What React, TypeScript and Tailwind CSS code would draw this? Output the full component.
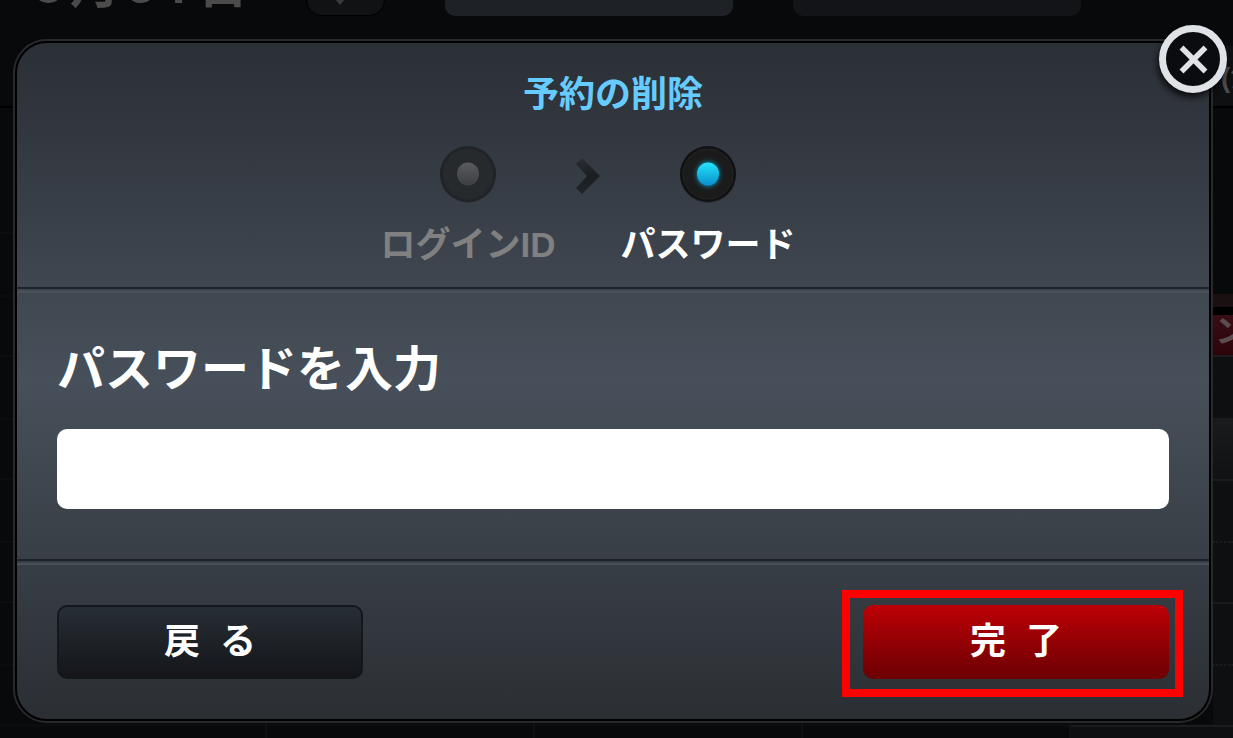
import React from "react";

const slots = [0, 1, 2, 3];
const dateGlyphs = ["8", "月", "3", "1", "日"];

function Backdrop() {
  return (
    <div aria-hidden="true" className="absolute inset-0 flex flex-col overflow-hidden bg-[#08090b]">
      <div className="flex h-4 shrink-0 items-end gap-[60px] pl-[34px]">
        <div className="flex w-[212px] shrink-0 gap-[7px] font-['Roboto','Noto_Sans_CJK_JP',sans-serif] text-[50px] leading-[60px] font-bold text-[#4b4b4b]">
          {dateGlyphs.map((glyph) => (
            <span key={glyph}>{glyph}</span>
          ))}
        </div>
        <div className="flex h-12 w-[79px] shrink-0 items-center justify-center rounded-2xl border border-black bg-[#111214] pr-3">
          <svg viewBox="0 0 16 10" className="mt-6 h-2.5 w-4" fill="#3a3a3c">
            <path d="M3 0H13L8 6Z" />
          </svg>
        </div>
        <div className="h-12 w-72 shrink-0 rounded-[10px] bg-[#1e2126]" />
        <div className="h-12 w-72 shrink-0 rounded-[10px] bg-[#131418]" />
      </div>
      <div className="mt-[30px] flex h-[62px] shrink-0 justify-end border-b-2 border-black">
        <div className="flex w-5 items-center bg-[#0f1012] pt-1 pl-2 text-[28px] font-bold whitespace-nowrap text-[#4b4b4b]">
          (注
        </div>
      </div>
      <div className="flex h-[619px] shrink-0">
        <div className="flex flex-1 flex-col border-b-2 border-[#0b0c0e]">
          <div className="h-[126px] shrink-0 border-b-2 border-[#0c0d0f]" />
          {slots.map((slot) => (
            <div key={slot} className="h-[123px] shrink-0 border-b-2 border-[#0c0d0f]">
              <div className="h-[63px] border-b-2 border-dotted border-[#0e0f11]" />
            </div>
          ))}
        </div>
        <div className="flex w-5 shrink-0 flex-col bg-[#0e0f11]">
          <div className="h-[186px] shrink-0 bg-[#08090a]" />
          <div className="h-[13px] shrink-0 bg-[#1a0f11]" />
          <div className="h-2 shrink-0 bg-black" />
          <div className="h-10 shrink-0 overflow-hidden bg-linear-to-b from-[#380d14] to-[#2d0509] pl-0.5 text-[32px] leading-8 font-bold whitespace-nowrap text-[#5b4d4f]">
            ン
          </div>
          <div className="h-[63px] shrink-0 border-t-2 border-[#1b1c1e]" />
          <div className="h-[63px] shrink-0 border-b-2 border-[#1b1c1e] bg-linear-to-b from-[#191b1d] to-[#101113]" />
          <div className="h-[123px] shrink-0 border-b-2 border-[#1b1c1e]">
            <div className="h-[62px] border-b-2 border-dotted border-[#1b1c1e]" />
          </div>
          <div className="h-[123px] shrink-0 border-b-2 border-[#1b1c1e]">
            <div className="h-[62px] border-b-2 border-dotted border-[#1b1c1e]" />
          </div>
        </div>
      </div>
      <div className="-mt-1 grid min-h-0 flex-1 grid-cols-[267px_268px_268px_268px_1fr]">
        {slots.map((slot) => (
          <div key={slot} className="border-r-2 border-[#0f1012]" />
        ))}
        <div className="mt-0.5 border-t-2 border-[#1b1c1e] bg-[#0e0f11]" />
      </div>
    </div>
  );
}

function StepDot({ active }: { active: boolean }) {
  return (
    <svg viewBox="0 0 60 62" className="h-[62px] w-[60px]" aria-hidden="true">
      <defs>
        <linearGradient id="lampOn" x1="0" y1="0" x2="0" y2="1">
          <stop offset="0" stopColor="#25e3fb" />
          <stop offset="1" stopColor="#0990cc" />
        </linearGradient>
        <linearGradient id="lampOff" x1="0" y1="0" x2="0" y2="1">
          <stop offset="0" stopColor="#5a5b5e" />
          <stop offset="1" stopColor="#3c3e41" />
        </linearGradient>
        <filter id="lampGlow" x="-50%" y="-50%" width="200%" height="200%">
          <feGaussianBlur stdDeviation="2" />
        </filter>
      </defs>
      <circle cx="30" cy="32" r="28" fill={active ? "#2a2d31" : "#30343a"} />
      <circle cx="30" cy="31" r="28" fill={active ? "#101112" : "#202327"} />
      <circle cx="30" cy="31" r="25" fill={active ? "#1b1b1c" : "#272a2d"} stroke={active ? "#252526" : "#27292d"} />
      {active && <ellipse cx="30" cy="31" rx="12" ry="13" fill="#0aa5d5" opacity="0.6" filter="url(#lampGlow)" />}
      <ellipse cx="30" cy="31" rx="11" ry="11.5" fill={active ? "url(#lampOn)" : "url(#lampOff)"} />
    </svg>
  );
}

function Step({ label, active = false }: { label: string; active?: boolean }) {
  return (
    <li
      aria-current={active ? "step" : undefined}
      className={`flex w-[176px] flex-col items-center gap-4 text-[35px] leading-[48px] font-bold whitespace-nowrap ${active ? "text-white" : "text-[#808080]"}`}
    >
      <StepDot active={active} />
      {label}
    </li>
  );
}

export default function App() {
  return (
    <div className="relative flex min-h-screen flex-col pt-[39px] pr-5 pb-[15px] pl-[13px] font-['Liberation_Sans','Noto_Sans_CJK_JP',sans-serif]">
      <Backdrop />
      <main
        role="dialog"
        aria-labelledby="dialog-title"
        className="relative flex flex-1 flex-col rounded-[34px] border-2 border-[#292929] bg-black p-0.5"
      >
        <div className="flex flex-1 flex-col rounded-[30px] bg-linear-to-b from-[#2b2f36] via-[#47505a] to-[#2b2f34]">
          <header className="flex flex-col items-center border-b-2 border-[#1f222b] pt-7 pb-[18px]">
            <h1 id="dialog-title" className="text-4xl leading-[48px] font-bold text-[#66ccff]">
              予約の削除
            </h1>
            <ol className="mt-6 flex gap-16 pr-[50px]">
              <Step label="ログインID" />
              <li aria-hidden="true" className="-mx-[44px] pt-[14px]">
                <svg viewBox="0 0 24 38" className="h-[38px] w-6">
                  <defs>
                    <linearGradient id="chev" x1="0" y1="0" x2="0" y2="1">
                      <stop offset="0" stopColor="#2b2f33" />
                      <stop offset="0.5" stopColor="#1b1e21" />
                      <stop offset="1" stopColor="#20252a" />
                    </linearGradient>
                  </defs>
                  <path d="M6 1L24 19L6 37L0 31L11 19L0 7Z" fill="url(#chev)" />
                </svg>
              </li>
              <Step label="パスワード" active />
            </ol>
          </header>
          <form className="flex flex-1 flex-col" onSubmit={(e) => e.preventDefault()}>
            <div className="px-10 pt-0.5">
              <div className="-mx-10 h-0.5 bg-[#495159]" />
              <label htmlFor="password" className="block pt-[45px] text-5xl leading-[64px] font-bold text-white">
                パスワードを入力
              </label>
              <input
                id="password"
                type="password"
                className="mt-[27px] block h-20 w-full rounded-[10px] bg-white px-5 text-4xl text-black outline-none"
              />
            </div>
            <div className="mt-[50px] border-t-2 border-[#1f222a] pt-0.5">
              <div className="h-0.5 bg-[#495159]" />
              <div className="flex justify-between pt-[25px] pr-[26px] pb-[22px] pl-10">
                <button
                  type="button"
                  className="mt-[15px] h-[74px] w-[306px] rounded-[10px] border-2 border-[#14171c] bg-linear-to-b from-[#272e35] to-[#14161a] text-4xl font-bold text-white"
                >
                  戻&nbsp; る
                </button>
                <div className="border-8 border-[#ff0000] pt-[7px] pr-1.5 pb-2.5 pl-[13px]">
                  <button
                    type="submit"
                    className="block h-[74px] w-[306px] rounded-[10px] bg-linear-to-b from-[#bd0006] to-[#6c0003] text-4xl font-bold text-white"
                  >
                    完&nbsp; 了
                  </button>
                </div>
              </div>
            </div>
          </form>
        </div>
        <button type="button" aria-label="閉じる" className="absolute -top-[17px] -right-[17px] size-[70px] rounded-full">
          <svg viewBox="0 0 70 70" className="size-[70px] overflow-visible">
            <defs>
              <filter id="closeShadow" x="-30%" y="-30%" width="160%" height="160%">
                <feGaussianBlur stdDeviation="3.5" />
              </filter>
            </defs>
            <circle cx="33" cy="40" r="33" fill="#000" opacity="0.8" filter="url(#closeShadow)" />
            <circle cx="35" cy="35" r="30.5" fill="#0a0c0f" stroke="#dfe2e6" strokeWidth="7" />
            <path d="M23.5 23.5L47.5 47.5M47.5 23.5L23.5 47.5" stroke="#dfe2e6" strokeWidth="5.5" />
          </svg>
        </button>
      </main>
    </div>
  );
}
